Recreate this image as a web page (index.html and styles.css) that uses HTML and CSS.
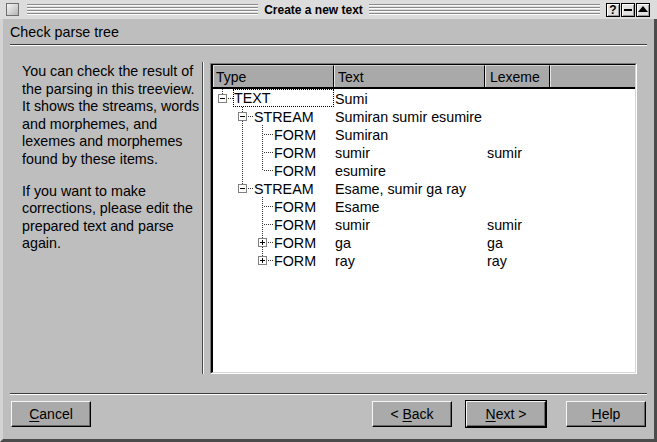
FILE: index.html
```html
<!DOCTYPE html>
<html>
<head>
<meta charset="utf-8">
<title>Create a new text</title>
<link rel="stylesheet" href="styles.css">
</head>
<body>
<div class="window">
  <div class="titlebar">
    <span class="tb-menu"></span>
    <span class="stripes"></span>
    <span class="title">Create a new text</span>
    <span class="stripes"></span>
    <span class="tb-btn tb-first">?</span>
    <span class="tb-btn"><span class="bar"></span></span>
    <span class="tb-btn"><svg width="10" height="7" viewBox="0 0 10 7"><path d="M5 0 L10 6 L0 6 Z" fill="#000"/></svg></span>
  </div>
  <div class="frame">
    <div class="page-title">Check parse tree</div>
    <div class="sep-h"></div>
    <div class="main">
      <div class="info">
        <p>You can check the result of<br>the parsing in this treeview.<br>It shows the streams, words<br>and morphemes, and<br>lexemes and morphemes<br>found by these items.</p>
        <p>If you want to make<br>corrections, please edit the<br>prepared text and parse<br>again.</p>
      </div>
      <div class="sep-v"></div>
      <div class="tree">
        <div class="tree-in">
          <div class="thead">
            <div class="th th-type">Type</div>
            <div class="th th-text">Text</div>
            <div class="th th-lex">Lexeme</div>
            <div class="th th-fill"></div>
          </div>
          <div class="tbody">
            <div class="row">
              <div class="c-type"><span class="ind ln-root"><span class="bx minus"></span></span><span class="lbl focus">TEXT</span></div>
              <div class="c-text">Sumi</div><div class="c-lex"></div>
            </div>
            <div class="row">
              <div class="c-type"><span class="ind"></span><span class="ind ln-tee"><span class="bx minus"></span></span><span class="lbl">STREAM</span></div>
              <div class="c-text">Sumiran sumir esumire</div><div class="c-lex"></div>
            </div>
            <div class="row">
              <div class="c-type"><span class="ind"></span><span class="ind ln-v"></span><span class="ind ln-tee"></span><span class="lbl">FORM</span></div>
              <div class="c-text">Sumiran</div><div class="c-lex"></div>
            </div>
            <div class="row">
              <div class="c-type"><span class="ind"></span><span class="ind ln-v"></span><span class="ind ln-tee"></span><span class="lbl">FORM</span></div>
              <div class="c-text">sumir</div><div class="c-lex">sumir</div>
            </div>
            <div class="row">
              <div class="c-type"><span class="ind"></span><span class="ind ln-v"></span><span class="ind ln-end"></span><span class="lbl">FORM</span></div>
              <div class="c-text">esumire</div><div class="c-lex"></div>
            </div>
            <div class="row">
              <div class="c-type"><span class="ind"></span><span class="ind ln-end"><span class="bx minus"></span></span><span class="lbl">STREAM</span></div>
              <div class="c-text">Esame, sumir ga ray</div><div class="c-lex"></div>
            </div>
            <div class="row">
              <div class="c-type"><span class="ind"></span><span class="ind"></span><span class="ind ln-tee"></span><span class="lbl">FORM</span></div>
              <div class="c-text">Esame</div><div class="c-lex"></div>
            </div>
            <div class="row">
              <div class="c-type"><span class="ind"></span><span class="ind"></span><span class="ind ln-tee"></span><span class="lbl">FORM</span></div>
              <div class="c-text">sumir</div><div class="c-lex">sumir</div>
            </div>
            <div class="row">
              <div class="c-type"><span class="ind"></span><span class="ind"></span><span class="ind ln-tee"><span class="bx plus"></span></span><span class="lbl">FORM</span></div>
              <div class="c-text">ga</div><div class="c-lex">ga</div>
            </div>
            <div class="row">
              <div class="c-type"><span class="ind"></span><span class="ind"></span><span class="ind ln-end"><span class="bx plus"></span></span><span class="lbl">FORM</span></div>
              <div class="c-text">ray</div><div class="c-lex">ray</div>
            </div>
          </div>
        </div>
      </div>
    </div>
    <div class="sep-h sep-bottom"></div>
    <div class="buttons">
      <button class="btn"><u>C</u>ancel</button>
      <button class="btn btn-back">&lt; <u>B</u>ack</button>
      <button class="btn btn-next"><u>N</u>ext &gt;</button>
      <button class="btn btn-help"><u>H</u>elp</button>
    </div>
  </div>
</div>
</body>
</html>
```

FILE: styles.css
```css
html, body {
  margin: 0;
  padding: 0;
  background: #bebebe;
}

body {
  font-family: "Liberation Sans", Arial, sans-serif;
  font-size: 14px;
  color: #000;
}

.window {
  width: 657px;
  height: 442px;
  display: flex;
  flex-direction: column;
  background: #bebebe;
  overflow: hidden;
}

/* ---------- title bar ---------- */
.titlebar {
  height: 19px;
  flex: none;
  display: flex;
  align-items: center;
  padding: 0 7px 0 6px;
  background: #dcdcdc;
  box-sizing: border-box;
}

.tb-menu {
  width: 13px;
  height: 13px;
  box-sizing: border-box;
  border: 1px solid #6e6e6e;
  background: linear-gradient(135deg, #f6f6f6, #b4b4b4);
  margin-right: 8px;
  flex: none;
}

.stripes {
  flex: 1;
  height: 11px;
  background: repeating-linear-gradient(to bottom, #8a8a8a 0 1px, #fbfbfb 1px 2px, transparent 2px 3px);
}

.title {
  padding: 0 6px;
  font-weight: bold;
  font-size: 12px;
  line-height: 14px;
  white-space: nowrap;
}

.tb-btn {
  width: 14px;
  height: 14px;
  box-sizing: border-box;
  border: 1px solid #000;
  background: #e2e2e2;
  box-shadow: inset 1px 1px #ffffff, inset -1px -1px #9a9a9a;
  margin-left: 1px;
  display: flex;
  align-items: center;
  justify-content: center;
  font-weight: bold;
  font-size: 12px;
  line-height: 12px;
  flex: none;
}

.tb-first {
  margin-left: 6px;
}

.bar {
  width: 8px;
  height: 2px;
  background: #000;
}

/* ---------- frame ---------- */
.frame {
  flex: 1;
  display: flex;
  flex-direction: column;
  border-left: 3px solid #d4d4d4;
  border-right: 3px solid #4b4b4b;
  border-bottom: 3px solid #4b4b4b;
  padding: 0 7px;
  min-height: 0;
}

.page-title {
  padding-top: 5px;
  line-height: 17px;
  font-size: 14.3px;
}

.sep-h {
  height: 2px;
  box-sizing: border-box;
  border-top: 1px solid #3c3c3c;
  border-bottom: 1px solid #ffffff;
  margin-top: 3px;
  flex: none;
}

.main {
  flex: 1;
  display: flex;
  margin-top: 16px;
  margin-bottom: 16px;
  min-height: 0;
}

.info {
  width: 192px;
  box-sizing: border-box;
  padding-left: 12px;
  padding-top: 1px;
  font-size: 14.3px;
  line-height: 17.5px;
  white-space: nowrap;
  flex: none;
}

.info p {
  margin: 0 0 14.5px 0;
}

.sep-v {
  width: 2px;
  box-sizing: border-box;
  border-left: 1px solid #4a4a4a;
  border-right: 1px solid #f4f4f4;
  flex: none;
}

/* ---------- tree view ---------- */
.tree {
  margin-left: 6px;
  margin-top: 1px;
  width: 427px;
  box-sizing: border-box;
  border: 1px solid;
  border-color: #7c7c7c #ffffff #ffffff #7c7c7c;
  display: flex;
  flex: none;
}

.tree-in {
  flex: 1;
  background: #ffffff;
  border-style: solid;
  border-width: 1px 1px 1px 2px;
  border-color: #000 #d6d6d6 #d6d6d6 #000;
  display: flex;
  flex-direction: column;
  overflow: hidden;
}

.thead {
  display: flex;
  height: 24px;
  box-sizing: border-box;
  border-bottom: 2px solid #000;
  background: #a9a9a9;
  flex: none;
}

.th {
  height: 22px;
  box-sizing: border-box;
  border-top: 1px solid #d2d2d2;
  border-left: 1px solid #e6e6e6;
  border-right: 1px solid #000;
  line-height: 22px;
  white-space: nowrap;
  flex: none;
}

.th-type { width: 121px; padding-left: 2px; }
.th-text { width: 151px; padding-left: 3px; }
.th-lex  { width: 65px;  padding-left: 4px; }
.th-fill { flex: 1; border-right: none; }

.tbody {
  display: flex;
  flex-direction: column;
  font-size: 14.3px;
}

.row {
  display: flex;
  height: 18px;
  white-space: nowrap;
}

.c-type {
  width: 121px;
  display: flex;
  flex: none;
}

.c-text {
  width: 151px;
  height: 18px;
  box-sizing: border-box;
  padding: 1px 0 0 1px;
  line-height: 18px;
  flex: none;
}

.c-lex {
  height: 18px;
  box-sizing: border-box;
  padding: 1px 0 0 2px;
  line-height: 18px;
}

.lbl {
  height: 18px;
  box-sizing: border-box;
  padding: 1px 0 0 1px;
  line-height: 18px;
}

.lbl.focus {
  flex: 1;
  padding: 0;
  line-height: 17px;
  border: 1px dotted #000;
}

.ind {
  width: 20px;
  height: 18px;
  flex: none;
  display: flex;
  align-items: flex-start;
  background-repeat: no-repeat;
}

.ln-v {
  background-image: repeating-linear-gradient(to bottom, #333 0 1px, transparent 1px 2px);
  background-size: 1px 18px;
  background-position: 9px 0;
}

.ln-tee {
  background-image:
    repeating-linear-gradient(to bottom, #333 0 1px, transparent 1px 2px),
    repeating-linear-gradient(to right, #333 0 1px, transparent 1px 2px);
  background-size: 1px 18px, 10px 1px;
  background-position: 9px 0, 11px 9px;
}

.ln-end,
.ln-root {
  background-image:
    repeating-linear-gradient(to bottom, #333 0 1px, transparent 1px 2px),
    repeating-linear-gradient(to right, #333 0 1px, transparent 1px 2px);
  background-size: 1px 10px, 10px 1px;
  background-position: 9px 0, 11px 9px;
}

.bx {
  width: 9px;
  height: 9px;
  box-sizing: border-box;
  margin: 5px 0 0 5px;
  border: 1px solid #808080;
  background-color: #fff;
  background-repeat: no-repeat;
}

.bx.minus {
  background-image: linear-gradient(#000, #000);
  background-size: 5px 1px;
  background-position: 1px 3px;
}

.bx.plus {
  background-image: linear-gradient(#000, #000), linear-gradient(#000, #000);
  background-size: 5px 1px, 1px 5px;
  background-position: 1px 3px, 3px 1px;
}

/* ---------- buttons ---------- */
.buttons {
  display: flex;
  align-items: center;
  height: 28px;
  margin: 5px 1px 11px 1px;
  flex: none;
}

.btn {
  width: 80px;
  height: 26px;
  box-sizing: border-box;
  margin: 0;
  padding: 0;
  background: #aaaaaa;
  border-style: solid;
  border-width: 1px;
  border-color: #f6f6f6 #000 #000 #f6f6f6;
  box-shadow: inset -1px -1px #686868;
  font-family: "Liberation Sans", Arial, sans-serif;
  font-size: 14px;
  color: #000;
  line-height: 22px;
  flex: none;
}

.btn u {
  text-decoration: underline;
  text-underline-offset: 2px;
}

.btn-back { margin-left: auto; }
.btn-next {
  margin-left: 14px;
  box-shadow: inset -1px -1px #686868, 0 0 0 1px #000;
}
.btn-help { margin-left: 20px; }
```
